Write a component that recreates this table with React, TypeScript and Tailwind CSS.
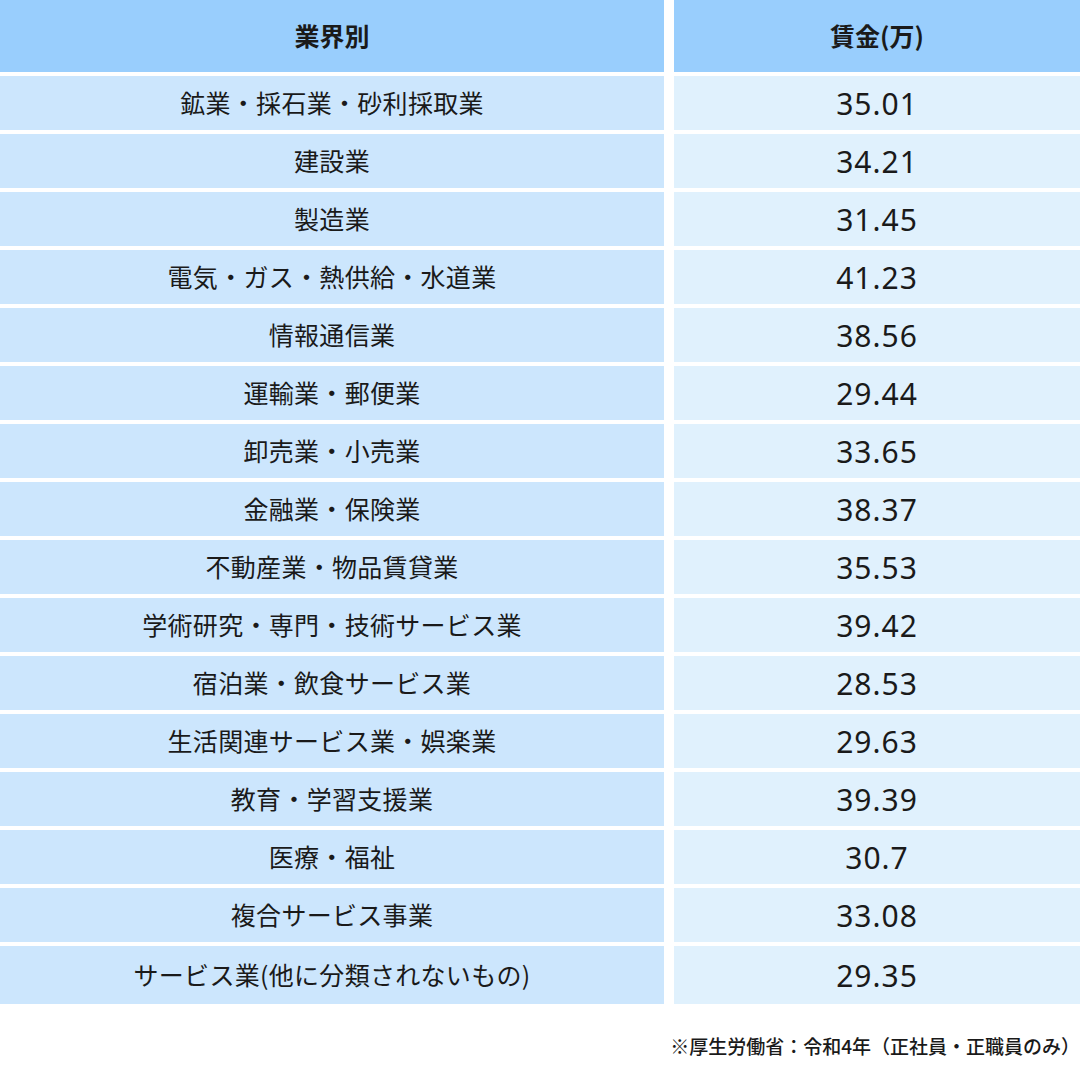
const rows: [string, string][] = [
  ['鉱業・採石業・砂利採取業', '35.01'],
  ['建設業', '34.21'],
  ['製造業', '31.45'],
  ['電気・ガス・熱供給・水道業', '41.23'],
  ['情報通信業', '38.56'],
  ['運輸業・郵便業', '29.44'],
  ['卸売業・小売業', '33.65'],
  ['金融業・保険業', '38.37'],
  ['不動産業・物品賃貸業', '35.53'],
  ['学術研究・専門・技術サービス業', '39.42'],
  ['宿泊業・飲食サービス業', '28.53'],
  ['生活関連サービス業・娯楽業', '29.63'],
  ['教育・学習支援業', '39.39'],
  ['医療・福祉', '30.7'],
  ['複合サービス事業', '33.08'],
  ['サービス業(他に分類されないもの)', '29.35'],
];

const jp = "font-['Noto_Sans_CJK_JP','Noto_Sans',sans-serif]";

export default function App() {
  return (
    <div className={`w-[1080px] h-[1080px] bg-white text-[#1a1a1a] ${jp}`}>
      <div className="grid grid-cols-[664px_406px] gap-x-[10px] gap-y-[4px]">
        <div className="h-[72px] bg-[#99cefd] flex items-center justify-center text-[25px] font-bold">
          業界別
        </div>
        <div className="h-[72px] bg-[#99cefd] flex items-center justify-center text-[25px] font-bold">
          賃金(万)
        </div>
        {rows.map(([name, wage], i) => {
          const h = i === rows.length - 1 ? 'h-[58px]' : 'h-[54px]';
          return [
            <div
              key={`n${i}`}
              className={`${h} bg-[#cce6fd] flex items-center justify-center text-[25px] tracking-[0.3px]`}
            >
              {name}
            </div>,
            <div
              key={`w${i}`}
              className={`${h} bg-[#e0f1fd] flex items-center justify-center text-[30px] font-['Noto_Sans',sans-serif] tracking-[1px]`}
            >
              {wage}
            </div>,
          ];
        })}
      </div>
      <div className="flex justify-end pr-[0px] pt-[28px] text-[19px] font-medium">
        ※厚生労働省：令和4年（正社員・正職員のみ）
      </div>
    </div>
  );
}
